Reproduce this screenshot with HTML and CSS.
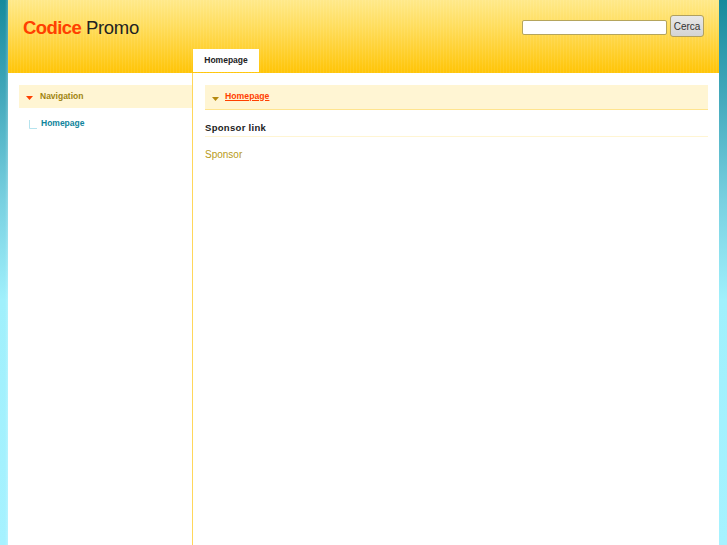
FILE: index.html
```html
<!DOCTYPE html>
<html lang="it">
<head>
<meta charset="utf-8">
<title>Codice Promo</title>
<link rel="stylesheet" href="styles.css">
</head>
<body>
<div class="page">
  <header class="header">
    <div class="top">
      <div class="logo"><span class="logo-a">Codice</span> Promo</div>
      <form class="search"><input class="search-input" type="text"><button class="search-btn" type="button">Cerca</button></form>
    </div>
    <nav class="tabs"><a class="tab">Homepage</a></nav>
  </header>
  <div class="columns">
    <aside class="side">
      <div class="side-title"><svg class="arrow" width="7" height="4" viewBox="0 0 7 4"><path d="M0 0h7L3.500 4z" fill="#ff4000"/></svg><span>Navigation</span></div>
      <div class="side-item"><svg class="tree" width="8" height="9" viewBox="0 0 8 9"><path d="M.5 0v8.500H8" fill="none" stroke="#b5e3ee"/></svg><a class="side-link">Homepage</a></div>
    </aside>
    <main class="main">
      <div class="crumb"><svg class="arrow" width="7" height="4" viewBox="0 0 7 4"><path d="M0 0h7L3.500 4z" fill="#b58a10"/></svg><a class="crumb-link">Homepage</a></div>
      <h2 class="sec">Sponsor link</h2>
      <a class="sponsor">Sponsor</a>
    </main>
  </div>
</div>
</body>
</html>
```
FILE: styles.css
```css
html, body { margin: 0; padding: 0; height: 100%; }
body {
  background:
    linear-gradient(90deg, rgba(255,255,255,0) 5px, rgba(255,255,255,.22) 8px, rgba(255,255,255,0) 8px),
    linear-gradient(#178a9c 0, #45aabd 100px, #78d0e0 200px, #a0f0fc 300px, #a6f2ff 100%);
  font-family: "Liberation Sans", Arial, sans-serif;
  overflow: hidden;
}
.page { margin: 0 8px; height: 100%; background: #fff; display: flex; flex-direction: column; }
.header {
  height: 73px;
  background: repeating-linear-gradient(90deg, rgba(255,255,255,.07) 0 1px, rgba(255,255,255,0) 1px 3px), linear-gradient(#ffe98a 0, #ffde60 25px, #ffc60c 70px, #ffc60c 73px);
  display: flex;
  flex-direction: column;
  justify-content: space-between;
}
.top { display: flex; justify-content: space-between; padding: 15px 15px 0; }
.logo { font-size: 18.500px; line-height: 24px; color: #222; letter-spacing: -.3px; padding-top: 1px; }
.logo-a { color: #ff4000; font-weight: bold; letter-spacing: -.6px; }
.search { display: flex; align-items: flex-start; gap: 3px; height: 22px; }
.search-input { width: 145px; box-sizing: border-box; height: 15px; margin: 5px 0 0; padding: 0 2px; border: 1px solid #b5a55c; border-radius: 2px; background: #fff; }
.search-btn { width: 34px; height: 22px; margin: 0; padding: 0; border: 1px solid #b0a060; border-radius: 3px; background: linear-gradient(#e8e8e8, #d4d4d4); font: 10px "Liberation Sans", Arial, sans-serif; color: #333; }
.tabs { display: flex; padding: 0 0 1px 185px; }
.tab { width: 66px; height: 23px; background: #fff; font-size: 8.500px; font-weight: bold; line-height: 22px; text-align: center; color: #222; }
.columns { flex: 1; display: flex; }
.side { padding: 12px 0 0 11px; box-sizing: border-box; border-right: 1px solid #ffd75a; width: 185px; }
.side-title { height: 23px; background: #fff5d3; display: flex; align-items: center; font-size: 8.500px; font-weight: bold; color: #a08410; padding-left: 7px; }
.side-title .arrow { margin: 3px 7px 0 0; }
.side-title span { margin-top: -2px; }
.side-item { display: flex; align-items: center; padding: 9px 0 0 10px; }
.tree { margin: 3px 4px 0 0; }
.side-link { font-size: 8.500px; font-weight: bold; color: #0e849c; margin-top: -1px; }
.main { flex: 1; padding: 12px 11px 0 12px; }
.crumb { height: 24px; background: #fff5d3; border-bottom: 1px solid #ffe48e; display: flex; align-items: center; padding-left: 7px; }
.crumb .arrow { margin: 3px 6px 0 0; }
.crumb-link { font-size: 8.700px; font-weight: bold; color: #ff4000; text-decoration: underline; margin-top: -3px; }
.sec { margin: 11px 0 0; font-size: 9.500px; line-height: 14px; letter-spacing: .3px; color: #222; border-bottom: 1px solid #fff5d3; padding-bottom: 1px; }
.sponsor { display: block; margin-top: 11px; font-size: 10px; line-height: 14px; color: #b89a20; }
```
